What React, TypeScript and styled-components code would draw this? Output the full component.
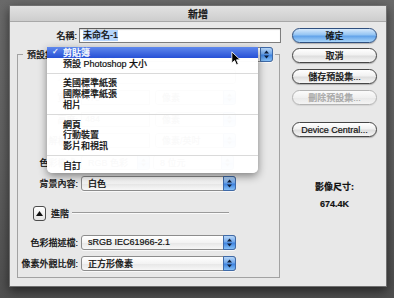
import styled, { createGlobalStyle } from "styled-components";

const Global = createGlobalStyle`
  html, body {
    margin: 0;
    padding: 0;
  }
  body {
    width: 394px;
    height: 298px;
    overflow: hidden;
    font-family: "Liberation Sans", "Noto Sans CJK TC", sans-serif;
    font-size: 9px;
    font-weight: 500;
    color: #111;
    -webkit-text-stroke: 0.2px currentColor;
  }
`;

const Screen = styled.div`
  position: relative;
  width: 394px;
  height: 298px;
  box-sizing: border-box;
  padding: 5px 0 0 9px;
  background: linear-gradient(180deg, #6a6a6a 0%, #5f5f5f 55%, #4f4f4f 100%);
`;

const Window = styled.div`
  width: 378px;
  height: 282px;
  box-sizing: border-box;
  border: 1px solid #707070;
  background: #e8e8e8;
  box-shadow: 0 4px 10px rgba(0, 0, 0, 0.55);
  display: flex;
  flex-direction: column;
`;

const TitleBar = styled.div`
  height: 16px;
  box-sizing: border-box;
  border-bottom: 1px solid #a8a8a8;
  background: linear-gradient(180deg, #e2e2e2, #cdcdcd);
  display: flex;
  align-items: center;
  justify-content: center;
  font-size: 10px;
  font-weight: bold;
  color: #1a1a1a;
`;

const Body = styled.div`
  display: flex;
  gap: 11px;
  padding: 6px 0 0 7px;
`;

const LeftCol = styled.div`
  width: 264px;
  display: flex;
  flex-direction: column;
`;

const RightCol = styled.div`
  width: 85px;
  display: flex;
  flex-direction: column;
`;

const NameRow = styled.div`
  display: flex;
  align-items: center;
  height: 15px;
  gap: 2px;
`;

const Label = styled.span<{ $w?: number; $dim?: boolean }>`
  width: ${(p) => p.$w ?? 59}px;
  flex: none;
  text-align: right;
  white-space: nowrap;
  color: ${(p) => (p.$dim ? "#9a9a9a" : "#111")};
`;

const TextInput = styled.div`
  flex: 1;
  height: 15px;
  box-sizing: border-box;
  border: 1px solid #7e7e7e;
  border-top-color: #5e5e5e;
  background: #fff;
  box-shadow: inset 0 1px 1px rgba(0, 0, 0, 0.18);
  display: flex;
  align-items: center;
  padding-left: 3px;
`;

const Selected = styled.span`
  background: #b5d5fd;
  line-height: 11px;
`;

const Group = styled.fieldset`
  margin: 5px 0 0 0;
  padding: 0 0 6px 1px;
  width: 263px;
  box-sizing: border-box;
  min-width: 0;
  border: 1px solid #a2a2a2;
`;

const Legend = styled.legend`
  margin-left: 4px;
  padding: 0;
  width: 252px;
  height: 13px;
  display: flex;
  align-items: center;
`;

const LegendLabel = styled.span`
  width: 59px;
  padding-left: 4px;
  box-sizing: border-box;
  white-space: nowrap;
`;

const Rows = styled.div`
  display: flex;
  flex-direction: column;
  gap: 6.5px;
  padding-top: 7.5px;
`;

const Row = styled.div<{ $top?: number }>`
  display: flex;
  align-items: center;
  height: 15px;
  gap: 3px;
  margin-top: ${(p) => p.$top ?? 0}px;
`;

const SelectBox = styled.div<{ $w: number; $h?: number; $off?: boolean }>`
  position: relative;
  width: ${(p) => p.$w}px;
  height: ${(p) => p.$h ?? 15}px;
  flex: none;
  box-sizing: border-box;
  border: 1px solid #8c8c8c;
  border-radius: 3px;
  background: linear-gradient(180deg, #ffffff 0%, #f3f3f3 50%, #e6e6e6 51%, #f7f7f7 100%);
  box-shadow: 0 1px 0 rgba(255, 255, 255, 0.7);
  display: flex;
  align-items: center;
  padding-left: 6px;
  white-space: nowrap;
  color: ${(p) => (p.$off ? "#a0a0a0" : "#111")};
`;

const Stepper = styled.span`
  position: absolute;
  right: -1px;
  top: -1px;
  bottom: -1px;
  width: 13px;
  box-sizing: border-box;
  border: 1px solid #3f6aa8;
  border-radius: 0 3px 3px 0;
  background: linear-gradient(180deg, #b7d6f7 0%, #6fa6ea 45%, #3f84e0 55%, #86c0f6 100%);
  display: flex;
  align-items: center;
  justify-content: center;
`;

const NumField = styled.div`
  width: 69px;
  height: 15px;
  flex: none;
  box-sizing: border-box;
  border: 1px solid #8a8a8a;
  background: #fff;
  display: flex;
  align-items: center;
  padding-left: 3px;
  margin-right: 2px;
`;

const Arrows = () => (
  <svg width="7" height="9" viewBox="0 0 7 9">
    <path d="M3.5 0.5 L6 3.5 L1 3.5 Z" fill="#0e1f3a" />
    <path d="M3.5 8.5 L6 5.5 L1 5.5 Z" fill="#0e1f3a" />
  </svg>
);

const Select: React.FC<{ w: number; h?: number; off?: boolean; children?: React.ReactNode }> = ({
  w,
  h,
  off,
  children,
}) => (
  <SelectBox $w={w} $h={h} $off={off}>
    {children}
    {!off && (
      <Stepper>
        <Arrows />
      </Stepper>
    )}
  </SelectBox>
);

const AdvancedRow = styled.div`
  display: flex;
  align-items: center;
  height: 15px;
  margin-top: 14.5px;
  padding-left: 14px;
  padding-right: 50px;
`;

const Disclosure = styled.div`
  width: 13px;
  height: 15px;
  box-sizing: border-box;
  border: 1px solid #4c4c4c;
  border-radius: 3px;
  background: linear-gradient(180deg, #ffffff, #e3e3e3);
  display: flex;
  align-items: center;
  justify-content: center;
`;

const AdvancedText = styled.span`
  margin: 0 3px 0 5px;
`;

const Rule = styled.div`
  flex: 1;
  height: 1px;
  background: #9a9a9a;
  border-bottom: 1px solid #fafafa;
`;

const Button = styled.div<{ $primary?: boolean; $disabled?: boolean; $top?: number }>`
  height: 15px;
  box-sizing: border-box;
  margin-top: ${(p) => p.$top ?? 0}px;
  border-radius: 8px;
  border: 1px solid ${(p) => (p.$primary ? "#2f4f7e" : p.$disabled ? "#b4b4b4" : "#464646")};
  background: ${(p) =>
    p.$primary
      ? "linear-gradient(180deg, #d6e9fc 0%, #94c4f3 45%, #62a3ea 55%, #a9d4f8 100%)"
      : p.$disabled
      ? "linear-gradient(180deg, #fbfbfb 0%, #f0f0f0 50%, #e8e8e8 51%, #f4f4f4 100%)"
      : "linear-gradient(180deg, #ffffff 0%, #f1f1f1 45%, #dedede 55%, #f6f6f6 100%)"};
  box-shadow: 0 1px 1px rgba(0, 0, 0, ${(p) => (p.$disabled ? 0.08 : 0.25)});
  color: ${(p) => (p.$disabled ? "#a6a6a6" : "#111")};
  display: flex;
  align-items: center;
  justify-content: center;
  white-space: nowrap;
`;

const SizeInfo = styled.div`
  margin-top: 45px;
  display: flex;
  flex-direction: column;
  align-items: center;
  gap: 6px;
  font-weight: bold;
  line-height: 11px;
`;

const Menu = styled.div`
  position: absolute;
  left: 47px;
  top: 47px;
  width: 211px;
  padding-bottom: 2px;
  background: rgba(255, 255, 255, 0.975);
  border-radius: 0 0 5px 5px;
  box-shadow: 0 3px 9px rgba(0, 0, 0, 0.45);
`;

const MenuItem = styled.div<{ $active?: boolean }>`
  position: relative;
  height: 10.75px;
  display: flex;
  align-items: center;
  padding-left: 16px;
  white-space: nowrap;
  color: ${(p) => (p.$active ? "#fff" : "#111")};
  background: ${(p) => (p.$active ? "linear-gradient(180deg, #5f88ec, #2650d6)" : "none")};
`;

const Check = styled.span`
  position: absolute;
  left: 5px;
  top: 0;
  line-height: 10.75px;
  font-family: "DejaVu Sans", sans-serif;
  font-size: 8px;
`;

const MenuSep = styled.div`
  height: 9px;
  display: flex;
  align-items: center;
  &::after {
    content: "";
    flex: 1;
    height: 1px;
    background: #dadada;
  }
`;

const Cursor = styled.svg`
  position: absolute;
  left: 231px;
  top: 51px;
`;

const menu: (string | null)[] = [
  "預設 Photoshop 大小",
  null,
  "美國標準紙張",
  "國際標準紙張",
  "相片",
  null,
  "網頁",
  "行動裝置",
  "影片和視訊",
  null,
  "自訂",
];

export default function App() {
  return (
    <>
      <Global />
      <Screen>
        <Window>
          <TitleBar>新增</TitleBar>
          <Body>
            <LeftCol>
              <NameRow>
                <Label $w={60}>名稱:</Label>
                <TextInput>
                  <Selected>未命名-1</Selected>
                </TextInput>
              </NameRow>
              <Group>
                <Legend>
                  <LegendLabel>預設集:</LegendLabel>
                  <Select w={191}>剪貼簿</Select>
                </Legend>
                <Rows>
                  <Row>
                    <Label $dim>大小:</Label>
                    <Select w={155} off />
                  </Row>
                  <Row>
                    <Label>寬度:</Label>
                    <NumField>475</NumField>
                    <Select w={81}>像素</Select>
                  </Row>
                  <Row>
                    <Label>高度:</Label>
                    <NumField>484</NumField>
                    <Select w={81}>像素</Select>
                  </Row>
                  <Row>
                    <Label>解析度:</Label>
                    <NumField>72</NumField>
                    <Select w={81}>像素/英吋</Select>
                  </Row>
                  <Row>
                    <Label>色彩模式:</Label>
                    <Select w={69}>RGB 色彩</Select>
                    <Select w={81}>8 位元</Select>
                  </Row>
                  <Row>
                    <Label>背景內容:</Label>
                    <Select w={155}>白色</Select>
                  </Row>
                </Rows>
                <AdvancedRow>
                  <Disclosure>
                    <svg width="7" height="5" viewBox="0 0 7 5">
                      <path d="M3.5 0 L7 5 L0 5 Z" fill="#111" />
                    </svg>
                  </Disclosure>
                  <AdvancedText>進階</AdvancedText>
                  <Rule />
                </AdvancedRow>
                <Row $top={14}>
                  <Label>色彩描述檔:</Label>
                  <Select w={155}>sRGB IEC61966-2.1</Select>
                </Row>
                <Row $top={6}>
                  <Label>像素外觀比例:</Label>
                  <Select w={155}>正方形像素</Select>
                </Row>
              </Group>
            </LeftCol>
            <RightCol>
              <Button $primary>確定</Button>
              <Button $top={5}>取消</Button>
              <Button $top={6}>儲存預設集...</Button>
              <Button $top={6} $disabled>
                刪除預設集...
              </Button>
              <Button $top={17}>Device Central...</Button>
              <SizeInfo>
                <span>影像尺寸:</span>
                <span>674.4K</span>
              </SizeInfo>
            </RightCol>
          </Body>
        </Window>
        <Menu>
          <MenuItem $active>
            <Check>✓</Check>剪貼簿
          </MenuItem>
          {menu.map((m, i) => (m ? <MenuItem key={i}>{m}</MenuItem> : <MenuSep key={i} />))}
        </Menu>
        <Cursor width="10" height="15" viewBox="0 0 12 18">
          <path
            d="M1 1 L1 14.5 L4.3 11.4 L6.6 16.6 L8.8 15.7 L6.6 10.6 L11 10.6 Z"
            fill="#000"
            stroke="#fff"
            strokeWidth="1"
            strokeLinejoin="round"
          />
        </Cursor>
      </Screen>
    </>
  );
}
